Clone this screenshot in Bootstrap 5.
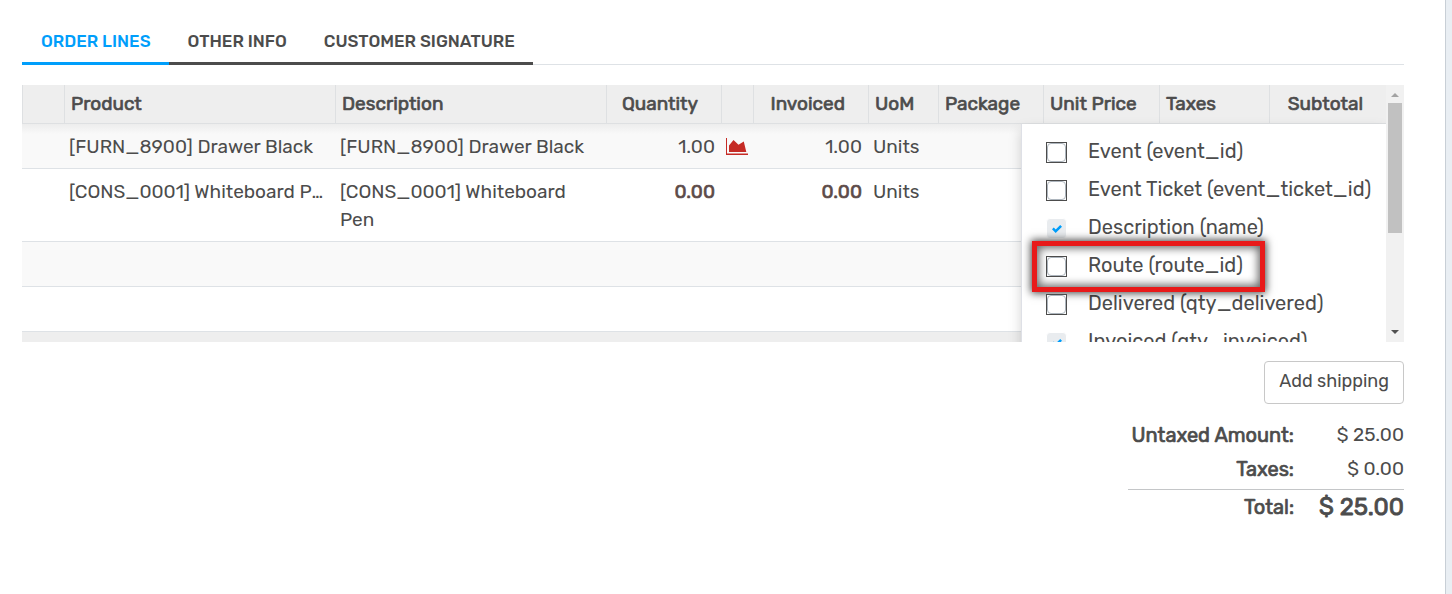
<!DOCTYPE html>
<html lang="en">
<head>
<meta charset="utf-8">
<meta name="viewport" content="width=device-width, initial-scale=1">
<title>Sales order</title>
<link href="https://cdn.jsdelivr.net/npm/bootstrap@5.3.0/dist/css/bootstrap.min.css" rel="stylesheet">
<style>
  body { background: #e9eef3; color: #4c4c4c; font-family: Rubik, Roboto, sans-serif; font-size: 19px; line-height: 28px; }
  .sheet { background: #fff; border-right: 1px solid #c8cfd6; margin-right: 6px; padding: 20px 41px 0 22px; }
  .heavy, .lines-table th, .totals th { font-weight: 400; -webkit-text-stroke: .035em currentColor; }

  .order-tabs { border-bottom: 1px solid #dee2e6; font-size: 17px; font-weight: 500; }
  .order-tabs .nav-link { border: 0; border-bottom: 3px solid #4c4c4c; border-radius: 0; margin-bottom: -1px; padding: 7px 18px 7px 19px; color: #4c4c4c; text-transform: uppercase; }
  .order-tabs .nav-link.active { background: none; color: #009efb; border-color: #009efb; }

  .lines { height: 257px; margin-top: 20px; }
  .lines-table { table-layout: fixed; border-collapse: separate; border-spacing: 0; color: inherit; margin: 0; }
  .lines-table th { background: #eee; border: 1px solid #dee0e2; border-width: 0 0 1px 1px; padding: 5px 6px; height: 39px; white-space: nowrap; }
  .lines-table td { border-bottom: 1px solid #dee2e6; padding: 9px 5px 7px; height: 45px; vertical-align: top; }
  .lines-table tbody tr:nth-child(odd) { background: #f9f9f9; }
  .lines-table tbody tr:first-child { background: linear-gradient(#ededed, #f9f9f9 10px); }
  .lines-table tfoot td { background: #eee; border: 0; }
  .lines-table .num { text-align: right; padding-right: 6px; }
  .lines-table th.num { padding-right: 23px; }
  .lines-table .zero { color: #5c4a48; }
  .w-handle { width: 42px; } .w-qty, .w-inv { width: 115px; } .w-icon { width: 32px; }
  .w-uom { width: 70px; } .w-pack { width: 105px; } .w-price { width: 116px; }
  .w-tax { width: 110px; } .w-sub { width: 117px; }
  .forecast { display: block; margin-top: 5px; line-height: 0; color: #c52b25; }

  .column-menu { top: 39px; right: 0; width: 365px; padding: 13px 0 8px; background: #fff; border-left: 1px solid #dee0e6; box-shadow: 0 6px 12px rgba(0,0,0,.175); font-size: 20px; }
  .column-item { height: 38px; padding-left: 24px; }
  .column-item label { margin-left: 21px; white-space: nowrap; }
  .pick { appearance: none; position: relative; width: 21px; height: 21px; margin: 5px 0 0; border: 1px solid #4c4c4c; background: #fff; flex: none; }
  .pick::before { content: ""; position: absolute; inset: 0; border: 1px solid #adb5bd; border-radius: 4px; }
  .pick:checked { border-color: #fff; border-radius: 4px; background: #e9ecef url("data:image/svg+xml,%3Csvg xmlns='http://www.w3.org/2000/svg' viewBox='0 0 8 8'%3E%3Cpath fill='%23009efb' d='M6.564.75l-3.59 3.612-1.538-1.55L0 4.26 2.974 7.25 8 2.193z'/%3E%3C/svg%3E") center/10px no-repeat; }
  .pick:checked::before { border: 0; }
  .callout-item::after { content: ""; position: absolute; top: -10px; left: 10px; width: 233px; height: 51px; border: 5px solid #e81a1a; box-shadow: 0 0 8px 1px rgba(0,0,0,.75), inset 0 0 9px 2px rgba(0,0,0,.6); pointer-events: none; }

  .scroll-rail { width: 18px; background: #f1f1f1; padding: 0 2px; }
  .scroll-rail svg { display: block; width: 14px; height: 18px; }
  .scroll-thumb { height: 130px; background: #c1c1c1; }

  .btn-ship { border: 1px solid #c8c8c8; border-radius: 4px; background: #fff; color: #4c4c4c; padding: 5px 14px 8px; font-size: 18px; line-height: 28px; margin-top: 19px; }
  .totals { width: 276px; margin: 14px 0 60px auto; }
  .totals th { width: 166px; font-size: 20px; white-space: nowrap; }
  .totals th, .totals td { height: 34px; padding: 3px 0; text-align: right; vertical-align: top; }
  .totals .subtotal-end > * { height: 37px; }
  .totals .grand > * { border-top: 1px solid #c4c6c8; }
  .totals .grand td { font-size: 24px; }
</style>
</head>
<body>
<main class="sheet min-vh-100">
  <ul class="nav nav-tabs order-tabs">
    <li class="nav-item"><a class="nav-link active" href="#lines">Order Lines</a></li>
    <li class="nav-item"><a class="nav-link" href="#info">Other Info</a></li>
    <li class="nav-item"><a class="nav-link" href="#signature">Customer Signature</a></li>
  </ul>

  <section id="lines" class="lines d-flex overflow-hidden">
    <div class="position-relative flex-grow-1 overflow-hidden">
      <table class="lines-table w-100">
        <colgroup>
          <col class="w-handle"><col><col><col class="w-qty"><col class="w-icon"><col class="w-inv">
          <col class="w-uom"><col class="w-pack"><col class="w-price"><col class="w-tax"><col class="w-sub">
        </colgroup>
        <thead>
          <tr>
            <th></th><th>Product</th><th>Description</th><th class="num">Quantity</th><th></th><th class="num">Invoiced</th>
            <th>UoM</th><th>Package</th><th>Unit Price</th><th>Taxes</th><th class="num">Subtotal</th>
          </tr>
        </thead>
        <tbody>
          <tr>
            <td></td><td class="text-truncate">[FURN_8900] Drawer Black</td><td>[FURN_8900] Drawer Black</td>
            <td class="num">1.00</td>
            <td><button type="button" class="forecast btn p-0 border-0" aria-label="Forecast"><svg width="22" height="17" viewBox="0 0 22 17" fill="currentColor"><path d="M0 0h1v15.500h21V17H0zM3 14V7.500L7.500 2l5 4.800L17.800 3.500 20.300 14z"/></svg></button></td>
            <td class="num">1.00</td><td>Units</td><td></td><td></td><td></td><td></td>
          </tr>
          <tr>
            <td></td><td class="text-truncate">[CONS_0001] Whiteboard Pen</td><td>[CONS_0001] Whiteboard Pen</td>
            <td class="num zero heavy">0.00</td><td></td><td class="num zero heavy">0.00</td><td>Units</td><td></td><td></td><td></td><td></td>
          </tr>
          <tr><td colspan="11"></td></tr>
          <tr><td colspan="11"></td></tr>
        </tbody>
        <tfoot><tr><td colspan="11"></td></tr></tfoot>
      </table>

      <div class="column-menu position-absolute">
        <div class="column-item d-flex"><input class="pick" type="checkbox" id="c1"><label for="c1">Event (event_id)</label></div>
        <div class="column-item d-flex"><input class="pick" type="checkbox" id="c2"><label for="c2">Event Ticket (event_ticket_id)</label></div>
        <div class="column-item d-flex"><input class="pick" type="checkbox" id="c3" checked><label for="c3">Description (name)</label></div>
        <div class="column-item d-flex position-relative callout-item"><input class="pick" type="checkbox" id="c4"><label for="c4">Route (route_id)</label></div>
        <div class="column-item d-flex"><input class="pick" type="checkbox" id="c5"><label for="c5">Delivered (qty_delivered)</label></div>
        <div class="column-item d-flex"><input class="pick" type="checkbox" id="c6" checked><label for="c6">Invoiced (qty_invoiced)</label></div>
      </div>
    </div>
    <div class="scroll-rail d-flex flex-column flex-shrink-0" aria-hidden="true">
      <svg viewBox="0 0 14 18"><path d="M3 12l4-4 4 4z" fill="#a3a3a3"/></svg>
      <div class="scroll-thumb"></div>
      <svg class="mt-auto" viewBox="0 0 14 18"><path d="M3 6h8l-4 4z" fill="#505050"/></svg>
    </div>
  </section>

  <div class="d-flex justify-content-end">
    <button type="button" class="btn-ship">Add shipping</button>
  </div>
  <table class="totals">
    <tbody>
      <tr><th scope="row">Untaxed Amount:</th><td>$ 25.00</td></tr>
      <tr class="subtotal-end"><th scope="row">Taxes:</th><td>$ 0.00</td></tr>
      <tr class="grand"><th scope="row">Total:</th><td class="heavy">$ 25.00</td></tr>
    </tbody>
  </table>
</main>
<script src="https://cdn.jsdelivr.net/npm/bootstrap@5.3.0/dist/js/bootstrap.bundle.min.js"></script>
</body>
</html>
